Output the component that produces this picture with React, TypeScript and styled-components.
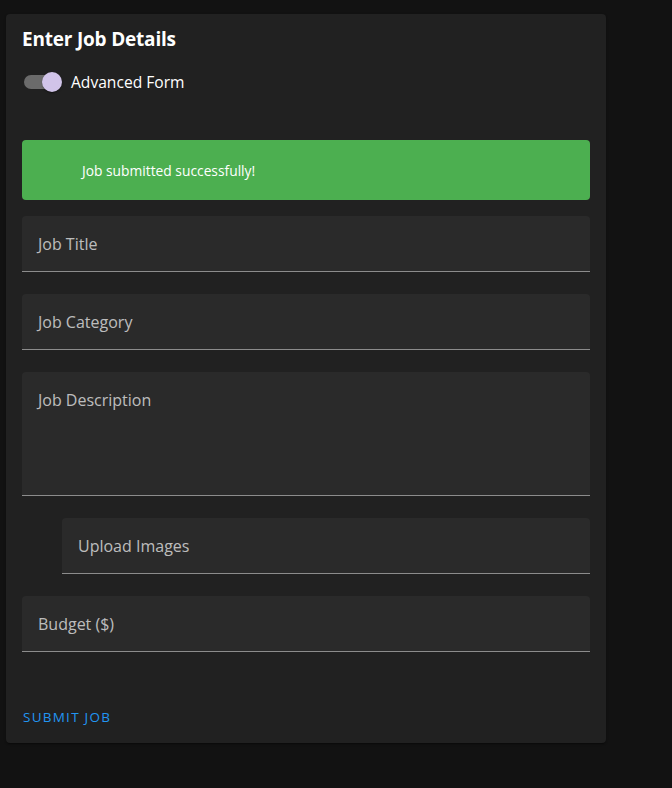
import React from "react";
import styled, { createGlobalStyle } from "styled-components";

const GlobalStyle = createGlobalStyle`
  html, body {
    margin: 0;
    padding: 0;
    background: #121212;
  }
  body {
    font-family: "Open Sans", "Noto Sans", sans-serif;
    color: #ffffff;
  }
`;

const Page = styled.div`
  padding: 14px 6px 46px 6px;
  min-height: 728px;
  box-sizing: content-box;
`;

const Card = styled.section`
  width: 600px;
  box-sizing: border-box;
  background: #212121;
  border-radius: 4px;
  padding: 16px 16px 8px 16px;
  box-shadow: 0 2px 1px -1px rgba(0,0,0,0.2), 0 1px 1px 0 rgba(0,0,0,0.14), 0 1px 3px 0 rgba(0,0,0,0.12);
`;

const Title = styled.h2`
  margin: 0;
  font-size: 19px;
  font-weight: 700;
  line-height: 19px;
  letter-spacing: -0.2px;
`;

const SwitchRow = styled.label`
  display: flex;
  align-items: center;
  gap: 13px;
  height: 38px;
  margin-top: 14px;
  margin-left: 2px;
  font-size: 15.6px;
`;

const Track = styled.span`
  position: relative;
  display: inline-block;
  width: 34px;
  height: 14px;
  border-radius: 7px;
  background: #6b6b6b;
`;

const Thumb = styled.span`
  position: absolute;
  top: -3px;
  left: 18px;
  width: 20px;
  height: 20px;
  border-radius: 50%;
  background: #d1c4e9;
  box-shadow: 0 2px 1px -1px rgba(0,0,0,0.2), 0 1px 1px 0 rgba(0,0,0,0.14), 0 1px 3px 0 rgba(0,0,0,0.12);
`;

const Alert = styled.div`
  margin-top: 39px;
  height: 60px;
  border-radius: 4px;
  background: #4caf50;
  display: flex;
  align-items: center;
  padding-left: 60px;
  font-size: 13.8px;
  font-weight: 500;
  color: #ffffff;
`;

const Fields = styled.div`
  display: flex;
  flex-direction: column;
  gap: 22px;
  margin-top: 16px;
`;

const Field = styled.div<{ $tall?: boolean; $indent?: boolean }>`
  height: ${(p) => (p.$tall ? "124px" : "56px")};
  margin-left: ${(p) => (p.$indent ? "40px" : "0")};
  box-sizing: border-box;
  background: #2a2a2a;
  border-radius: 4px 4px 0 0;
  border-bottom: 1px solid #8c8c8c;
  padding: ${(p) => (p.$tall ? "17px 16px" : "0 16px")};
  display: flex;
  align-items: ${(p) => (p.$tall ? "flex-start" : "center")};
  font-size: 16px;
  color: rgba(255, 255, 255, 0.7);
`;

const SubmitButton = styled.button`
  margin-top: 47px;
  margin-left: 1px;
  height: 36px;
  padding: 0;
  background: transparent;
  border: none;
  color: #2196f3;
  font-family: inherit;
  font-size: 13.5px;
  font-weight: 500;
  letter-spacing: 1.25px;
  text-transform: uppercase;
  cursor: pointer;
  display: block;
`;

export default function App() {
  return (
    <>
      <GlobalStyle />
      <Page>
        <Card>
          <Title>Enter Job Details</Title>
          <SwitchRow>
            <Track>
              <Thumb />
            </Track>
            Advanced Form
          </SwitchRow>
          <Alert>Job submitted successfully!</Alert>
          <Fields>
            <Field>Job Title</Field>
            <Field>Job Category</Field>
            <Field $tall>Job Description</Field>
            <Field $indent>Upload Images</Field>
            <Field>Budget ($)</Field>
          </Fields>
          <SubmitButton>Submit Job</SubmitButton>
        </Card>
      </Page>
    </>
  );
}
